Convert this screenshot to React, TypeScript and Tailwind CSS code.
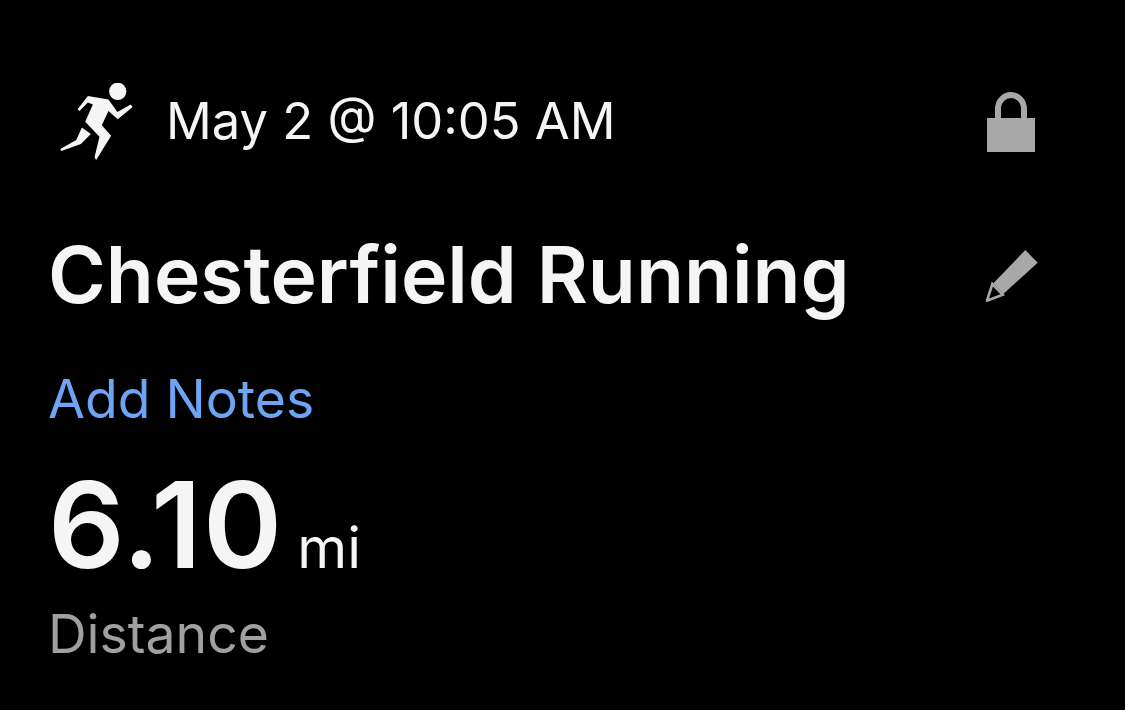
function Runner() {
  return (
    <svg width="73" height="77" viewBox="60 38 218 232" className="shrink-0">
      <circle cx="233" cy="63" r="26" fill="#f5f5f5" />
      <polygon
        fill="#f5f5f5"
        points="112,117 143,77 205,88 232,125 272,103 278,110 233,147 205,122 185,165 213,197 168,270 163,262 178,200 135,155 158,103 143,97 118,122"
      />
      <polygon fill="#f5f5f5" points="125,172 152,192 122,222 63,243 60,237 108,210" />
    </svg>
  );
}

function LockIcon() {
  return (
    <svg width="48" height="60" viewBox="0 0 48 60" className="shrink-0">
      <path d="M11 27 V17 C11 9 17 3 24 3 C31 3 37 9 37 17 V27" fill="none" stroke="#a8a8a8" strokeWidth="6" />
      <rect x="0" y="26" width="48" height="34" fill="#a8a8a8" />
    </svg>
  );
}

function PencilIcon() {
  return (
    <svg width="53" height="53" viewBox="0 0 159 157" className="shrink-0">
      <polygon fill="#a8a8a8" points="118,2 155,40 52,134 22,102" />
      <polygon fill="none" stroke="#a8a8a8" strokeWidth="8" points="19,104 50,136 3,154" />
    </svg>
  );
}

export default function App() {
  return (
    <div className="w-[1125px] h-[710px] bg-black text-[#f5f5f5] pl-[48px] pr-[90px] pt-[83px] font-['Inter','Liberation_Sans',sans-serif] overflow-hidden">
      <div className="flex items-center justify-between h-[77px]">
        <div className="flex items-center gap-[33px] pl-[12px]">
          <Runner />
          <span className="text-[50.7px] leading-none">May 2 @ 10:05 AM</span>
        </div>
        <LockIcon />
      </div>
      <div className="flex items-center justify-between mt-[70px] -mr-[4px]">
        <h1 className="text-[78.5px] leading-[90px] font-semibold">Chesterfield Running</h1>
        <PencilIcon />
      </div>
      <p className="text-[53.5px] leading-[60px] text-[#6ea4f4] mt-[49px]">Add Notes</p>
      <div className="flex items-baseline gap-[14px] mt-[23px]">
        <span className="text-[120px] leading-[146px] font-semibold tracking-[1.2px]">6.10</span>
        <span className="text-[57px] leading-none">mi</span>
      </div>
      <p className="text-[53.5px] leading-[60px] text-[#a0a0a0] mt-[6px]">Distance</p>
    </div>
  );
}
